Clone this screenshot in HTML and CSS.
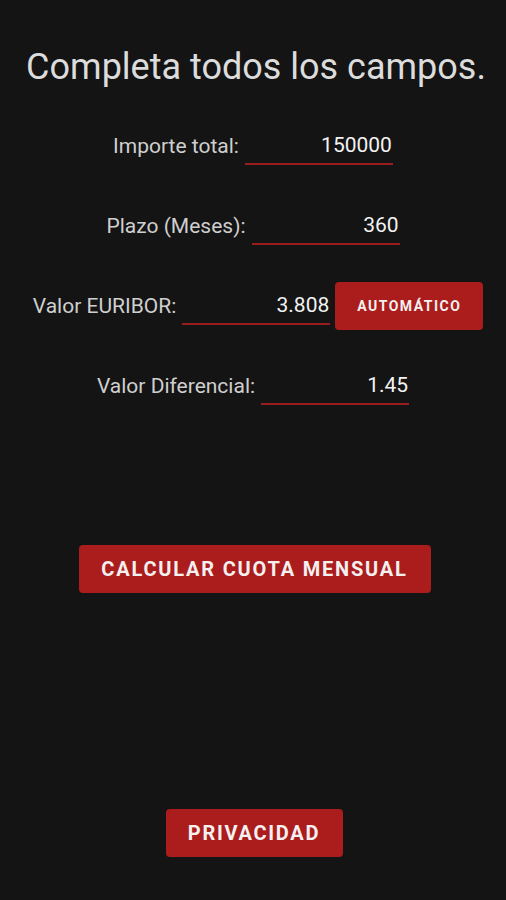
FILE: index.html
```html
<!DOCTYPE html>
<html lang="es">
<head>
    <meta charset="UTF-8">
    <meta name="viewport" content="width=device-width, initial-scale=1.0">
    <title>Calculadora Hipoteca</title>
    <link rel="stylesheet" href="styles.css">
</head>
<body>
<div class="screen">
    <h1 class="title">Completa todos los campos.</h1>

    <div class="form">
        <div class="row">
            <label class="label" for="importe">Importe total:</label>
            <input class="field" id="importe" type="text" value="150000">
        </div>
        <div class="row">
            <label class="label" for="plazo">Plazo (Meses):</label>
            <input class="field" id="plazo" type="text" value="360">
        </div>
        <div class="row row-wide">
            <label class="label" for="euribor">Valor EURIBOR:</label>
            <input class="field" id="euribor" type="text" value="3.808">
            <button class="btn btn-small">AUTOMÁTICO</button>
        </div>
        <div class="row">
            <label class="label" for="diferencial">Valor Diferencial:</label>
            <input class="field" id="diferencial" type="text" value="1.45">
        </div>
    </div>

    <button class="btn btn-main">CALCULAR CUOTA MENSUAL</button>

    <button class="btn btn-privacy">PRIVACIDAD</button>
</div>
</body>
</html>
```

FILE: styles.css
```css
html, body {
    margin: 0;
    padding: 0;
    background: #141414;
}
.screen {
    width: 506px;
    height: 900px;
    display: flex;
    flex-direction: column;
    align-items: center;
    font-family: Roboto, "Noto Sans", sans-serif;
    color: #d6d6d6;
}
.title {
    margin: 46px 0 0 6px;
    font-size: 36px;
    font-weight: 400;
    line-height: 42px;
    color: #dcdcdc;
    white-space: nowrap;
}
.form {
    margin-top: 18px;
    display: flex;
    flex-direction: column;
    align-items: center;
}
.row {
    height: 80px;
    display: flex;
    align-items: center;
    gap: 6px;
}
.row-wide {
    margin-left: 10px;
}
.label {
    font-size: 21px;
    color: #cfcfcf;
}
.field {
    width: 148px;
    box-sizing: border-box;
    margin-top: 4px;
    padding: 0 1px 4px 0;
    height: 33px;
    background: transparent;
    border: none;
    border-bottom: 2px solid #9a1d1d;
    color: #f2f2f2;
    font-family: Roboto, "Noto Sans", sans-serif;
    font-size: 21px;
    text-align: right;
    outline: none;
}
.btn {
    background: #ab1c1c;
    color: #f4f0f0;
    border: none;
    border-radius: 4px;
    font-family: Roboto, "Noto Sans", sans-serif;
    font-weight: 700;
    cursor: pointer;
}
.btn-small {
    width: 148px;
    height: 48px;
    margin-left: -1px;
    font-size: 14px;
    letter-spacing: 1.5px;
}
.btn-main {
    margin: 119px 0 0 3px;
    width: 352px;
    height: 48px;
    font-size: 20px;
    letter-spacing: 1.8px;
}
.btn-privacy {
    margin: 216px 0 0 2px;
    width: 177px;
    height: 48px;
    font-size: 20px;
    letter-spacing: 1.7px;
}
```
